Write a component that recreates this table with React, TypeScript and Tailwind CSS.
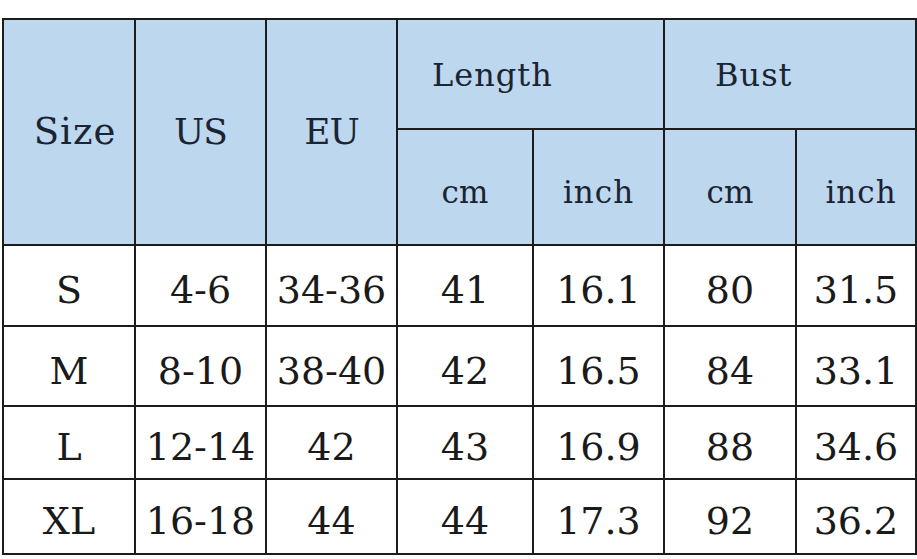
const rows = [
  ["S", "4-6", "34-36", "41", "16.1", "80", "31.5"],
  ["M", "8-10", "38-40", "42", "16.5", "84", "33.1"],
  ["L", "12-14", "42", "43", "16.9", "88", "34.6"],
  ["XL", "16-18", "44", "44", "17.3", "92", "36.2"],
];

const head = "bg-[#bdd7ee] text-[#1b2432] flex items-center justify-center";

export default function App() {
  return (
    <div className="w-[917px] h-[559px] bg-white overflow-hidden pt-[18px] pl-[2px] font-['DejaVu_Serif',serif]">
      <div className="grid w-fit grid-cols-[130px_129px_129px_134px_129px_130px_118px] grid-rows-[108px_114px_79px_78px_71px_73px] gap-[2px] border-2 border-[#1c1c1c] bg-[#1c1c1c]">
        <div className={`${head} row-span-2 text-[37px] tracking-[1px] pl-[12px]`}>Size</div>
        <div className={`${head} row-span-2 text-[36px] tracking-[-1px]`}>US</div>
        <div className={`${head} row-span-2 text-[36px] tracking-[-1px]`}>EU</div>
        <div className={`${head} col-span-2 !justify-start pl-[34px] text-[32px] tracking-[1px] pt-[2px]`}>Length</div>
        <div className={`${head} col-span-2 !justify-start pl-[50px] text-[32px] tracking-[1px] pt-[2px]`}>Bust</div>
        <div className={`${head} text-[31px] pt-[10px]`}>cm</div>
        <div className={`${head} text-[31px] tracking-[1px] pt-[10px]`}>inch</div>
        <div className={`${head} text-[31px] pt-[10px]`}>cm</div>
        <div className={`${head} text-[31px] tracking-[1px] pt-[10px] pl-[10px]`}>inch</div>
        {rows.map((r) =>
          r.map((v, i) => (
            <div
              key={r[0] + i}
              className="bg-white text-[#1a1a1a] text-[38px] flex items-center justify-center pt-[10px]"
            >
              {v}
            </div>
          ))
        )}
      </div>
    </div>
  );
}
